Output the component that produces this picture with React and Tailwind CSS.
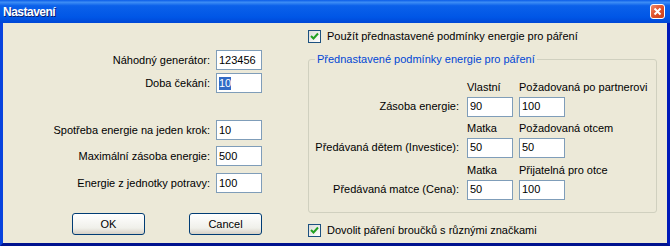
import React from 'react';

function Field({ value, selected }) {
    return (
        <div className="w-[46px] h-[20px] border border-[#7f9db9] bg-white flex items-center pl-[2px]">
            {selected ? <span className="bg-[#316ac5] text-white leading-[13px]">{value}</span> : <span>{value}</span>}
        </div>
    );
}

function Check({ label }) {
    return (
        <div className="flex items-center gap-[6px] h-[13px]">
            <div className="w-[13px] h-[13px] border border-[#1c5180] bg-[linear-gradient(135deg,#dcdcd7,#ffffff)] flex items-center justify-center">
                <svg width="9" height="9" viewBox="0 0 9 9">
                    <path d="M1 4 L3.5 6.5 L8 1.5" stroke="#21a121" strokeWidth="2" fill="none" />
                </svg>
            </div>
            <span className="whitespace-nowrap">{label}</span>
        </div>
    );
}

function Button({ children }) {
    return (
        <div className="w-[73px] h-[22px] rounded-[3px] border border-[#003c74] bg-[linear-gradient(to_bottom,#ffffff,#f0f0ea_70%,#d6d0c5)] flex items-center justify-center">
            {children}
        </div>
    );
}

const leftRows = [
    { label: 'Náhodný generátor:', value: '123456', mt: 'mt-[27px]' },
    { label: 'Doba čekání:', value: '10', mt: 'mt-[3px]', selected: true },
    { label: 'Spotřeba energie na jeden krok:', value: '10', mt: 'mt-[27px]' },
    { label: 'Maximální zásoba energie:', value: '500', mt: 'mt-[6px]' },
    { label: 'Energie z jednotky potravy:', value: '100', mt: 'mt-[7px]' },
];

const groupRows = [
    { label: 'Zásoba energie:', h1: 'Vlastní', h2: 'Požadovaná po partnerovi', v1: '90', v2: '100', mt: '' },
    { label: 'Předávaná dětem (Investice):', h1: 'Matka', h2: 'Požadovaná otcem', v1: '50', v2: '50', mt: 'mt-[4px]' },
    { label: 'Předávaná matce (Cena):', h1: 'Matka', h2: 'Přijatelná pro otce', v1: '50', v2: '100', mt: 'mt-[5px]' },
];

export default function App() {
    return (
        <div className="w-[670px] h-[246px] flex flex-col font-['Liberation_Sans',Arial,sans-serif] text-[11px] text-black">
            <div className="h-[23px] flex items-center justify-between pl-[3px] pr-[5px] bg-[linear-gradient(to_bottom,#0a5ce8_0%,#3d8df5_10%,#0b61ea_25%,#0056e6_75%,#0047d6_100%)]">
                <span className="text-white font-bold text-[12px] tracking-[-0.5px] [text-shadow:1px_1px_0_#0a1e6e]">Nastavení</span>
                <div className="w-[15px] h-[15px] rounded-[3px] border border-white bg-[linear-gradient(135deg,#f08a6a,#e0512a_50%,#c8401c)] flex items-center justify-center">
                    <svg width="9" height="9" viewBox="0 0 9 9">
                        <path d="M1.5 1.5 L7.5 7.5 M7.5 1.5 L1.5 7.5" stroke="white" strokeWidth="2" />
                    </svg>
                </div>
            </div>

            <div className="flex-1 flex bg-[#ece9d8] border-l-[3px] border-r-[3px] border-b-[3px] border-l-[#0843de] border-r-[#0019b8] border-b-[#00138f]">
                {/* left column */}
                <div className="w-[259px] flex flex-col items-end">
                    {leftRows.map((r, i) => (
                        <div key={i} className={`flex items-center gap-[6px] ${r.mt}`}>
                            <span className="whitespace-nowrap">{r.label}</span>
                            <Field value={r.value} selected={r.selected} />
                        </div>
                    ))}
                    <div className="flex gap-[44px] mt-[20px]">
                        <Button>OK</Button>
                        <Button>Cancel</Button>
                    </div>
                </div>

                {/* right column */}
                <div className="ml-[46px] flex flex-col">
                    <div className="mt-[7px]">
                        <Check label="Použít přednastavené podmínky energie pro páření" />
                    </div>
                    <fieldset className="mt-[8px] w-[349px] border border-[#d0d0bf] rounded-[3px] pt-[12px] pb-[12px]">
                        <legend className="ml-[6px] px-[2px] text-[#0046d5]">Přednastavené podmínky energie pro páření</legend>
                        {groupRows.map((r, i) => (
                            <div key={i} className={`flex items-end ${r.mt}`}>
                                <div className="w-[150px] h-[20px] flex items-center justify-end whitespace-nowrap">{r.label}</div>
                                <div className="ml-[8px] w-[46px] flex flex-col gap-[3px]">
                                    <span className="whitespace-nowrap leading-[14px]">{r.h1}</span>
                                    <Field value={r.v1} />
                                </div>
                                <div className="ml-[6px] w-[46px] flex flex-col gap-[3px]">
                                    <span className="whitespace-nowrap leading-[14px]">{r.h2}</span>
                                    <Field value={r.v2} />
                                </div>
                            </div>
                        ))}
                    </fieldset>
                    <div className="mt-[11px]">
                        <Check label="Dovolit páření broučků s různými značkami" />
                    </div>
                </div>
            </div>
        </div>
    );
}
